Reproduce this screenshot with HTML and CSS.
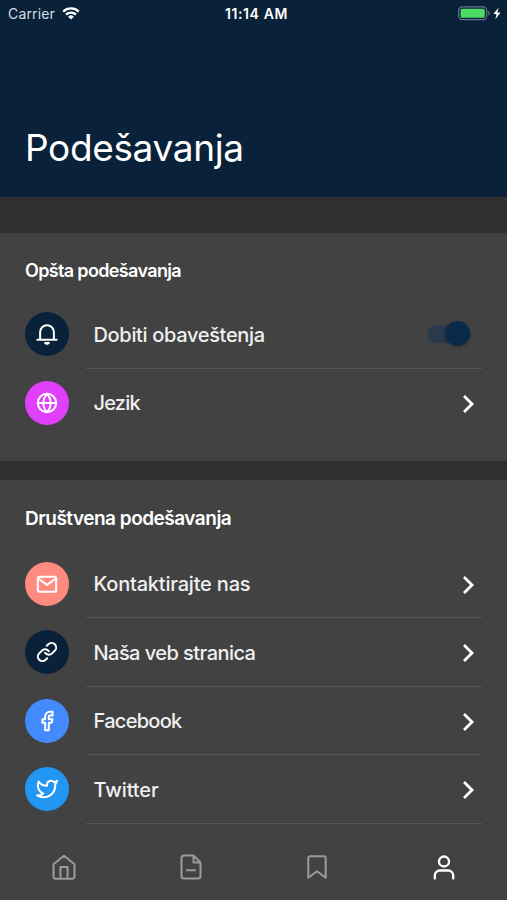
FILE: index.html
```html
<!DOCTYPE html>
<html lang="sr">
<head>
<meta charset="utf-8">
<title>Podešavanja</title>
<link rel="stylesheet" href="styles.css">
</head>
<body>
<header class="header">
  <div class="status">
    <div class="carrier"><span class="carrier-name">Carrier</span>
      <svg width="18" height="13" viewBox="0 0 18 13" fill="none" stroke="#fff" stroke-width="2.3"><path d="M1.2 4.6a11.2 11.2 0 0 1 15.6 0M4 7.6a7.2 7.2 0 0 1 10 0"/><path d="M9 12.6 6.1 9.7a4.2 4.2 0 0 1 5.8 0z" fill="#fff" stroke="none"/></svg>
    </div>
    <div class="clock"><span class="clock-text">11:14 AM</span></div>
    <div class="power">
      <svg width="44" height="15" viewBox="0 0 44 15"><rect x=".7" y=".9" width="28" height="12.8" rx="3.6" fill="none" stroke="#667584" stroke-width="1.2"/><rect x="2.6" y="2.8" width="24.2" height="9" rx="1.6" fill="#4cd964"/><path d="M30.3 5v4.6c2-.7 2-3.9 0-4.6z" fill="#667584"/><path d="M40.5 1.7 35.3 8h3.1l-1 5.2 5.2-6.6h-3.2z" fill="#fff"/></svg>
    </div>
  </div>
  <h1 class="title"><span class="title-text">Podešavanja</span></h1>
</header>
<main>
  <section class="section general">
    <h2 class="heading"><span class="h-general">Opšta podešavanja</span></h2>
    <div class="row">
      <span class="badge navy"><svg class="icon" viewBox="0 0 24 24"><path d="M1.5 18.200h21M4.500 18V10a7.500 7.500 0 0 1 15 0v8M10 21.800h4l-2 1z"/></svg></span>
      <div class="cell"><span class="label l-notify">Dobiti obaveštenja</span><span class="switch"><span class="knob"></span></span></div>
    </div>
    <div class="row">
      <span class="badge magenta"><svg class="icon" viewBox="0 0 24 24"><circle cx="12" cy="12" r="10"/><path d="M2 12h20M12 2a15.3 15.3 0 0 1 4 10 15.3 15.3 0 0 1-4 10 15.3 15.3 0 0 1-4-10 15.3 15.3 0 0 1 4-10z"/></svg></span>
      <div class="cell last"><span class="label l-language">Jezik</span><svg class="chevron" viewBox="0 0 12 20"><path d="m2 2 8 8-8 8"/></svg></div>
    </div>
  </section>
  <section class="section social">
    <h2 class="heading"><span class="h-social">Društvena podešavanja</span></h2>
    <div class="row">
      <span class="badge coral"><svg class="icon" viewBox="0 0 24 24"><rect x="2" y="4" width="20" height="16.5" rx="2"/><path d="m2.3 6 9.7 7 9.7-7"/></svg></span>
      <div class="cell"><span class="label l-contact">Kontaktirajte nas</span><svg class="chevron" viewBox="0 0 12 20"><path d="m2 2 8 8-8 8"/></svg></div>
    </div>
    <div class="row">
      <span class="badge navy"><svg class="icon" viewBox="0 0 24 24"><path d="M10 13a5 5 0 0 0 7.54.54l3-3a5 5 0 0 0-7.07-7.07l-1.72 1.71"/><path d="M14 11a5 5 0 0 0-7.54-.54l-3 3a5 5 0 0 0 7.07 7.07l1.71-1.71"/></svg></span>
      <div class="cell"><span class="label l-web">Naša veb stranica</span><svg class="chevron" viewBox="0 0 12 20"><path d="m2 2 8 8-8 8"/></svg></div>
    </div>
    <div class="row">
      <span class="badge blue"><svg class="icon" viewBox="0 0 24 24"><path d="M18 2h-3a5 5 0 0 0-5 5v3H7v4h3v8h4v-8h3l1-4h-4V7a1 1 0 0 1 1-1h3z"/></svg></span>
      <div class="cell"><span class="label l-facebook">Facebook</span><svg class="chevron" viewBox="0 0 12 20"><path d="m2 2 8 8-8 8"/></svg></div>
    </div>
    <div class="row">
      <span class="badge sky"><svg class="icon" viewBox="0 0 24 24"><path d="M23 3a10.9 10.9 0 0 1-3.14 1.53 4.48 4.48 0 0 0-7.86 3v1A10.66 10.66 0 0 1 3 4s-4 9 5 13a11.64 11.64 0 0 1-7 2c9 5 20 0 20-11.5a4.5 4.5 0 0 0-.08-.83A7.72 7.72 0 0 0 23 3z"/></svg></span>
      <div class="cell"><span class="label l-twitter">Twitter</span><svg class="chevron" viewBox="0 0 12 20"><path d="m2 2 8 8-8 8"/></svg></div>
    </div>
  </section>
</main>
<nav class="tabs">
  <svg class="tab" viewBox="0 0 26 28"><path d="M2.5 11.2 13 2.8l10.5 8.4v12.3a2.2 2.2 0 0 1-2.2 2.2H4.700a2.200 2.200 0 0 1-2.200-2.200zM9.500 25.500V14h7v11.500"/></svg>
  <svg class="tab" viewBox="0 0 26 28"><path d="M15.500 2.500H6A2.500 2.500 0 0 0 3.500 5v18A2.500 2.500 0 0 0 6 25.500h14a2.500 2.500 0 0 0 2.500-2.500V9.500zM15.500 2.500v7h7M9 17.300h8"/></svg>
  <svg class="tab" viewBox="0 0 26 28"><path d="M21.700 24.800 13 18.300l-8.700 6.500V5.200a2 2 0 0 1 2-2h13.400a2 2 0 0 1 2 2z"/></svg>
  <svg class="tab active" viewBox="0 0 26 28"><circle cx="13" cy="8.500" r="5"/><path d="M3.800 25.500v-3a5 5 0 0 1 5-5h8.400a5 5 0 0 1 5 5v3"/></svg>
</nav>
</body>
</html>
```
FILE: styles.css
```css
* { box-sizing: border-box; }
body {
  margin: 0;
  height: 900px;
  overflow: hidden;
  background: #303030;
  color: #fff;
  font-family: Inter, "Open Sans", sans-serif;
  display: flex;
  flex-direction: column;
}
svg { display: block; flex: none; }
h1, h2 { margin: 0; }
.header { height: 196.5px; background: #092139; flex: none; }
.status {
  display: grid;
  grid-template-columns: 1fr 1fr 1fr;
  align-items: center;
  height: 27px;
  padding: 0 5px 0 8px;
}
.carrier { display: flex; align-items: center; gap: 7px; font-size: 14px; color: #d8dee3; }
.carrier-name { letter-spacing: 0.15px; }
.clock { text-align: center; font-size: 14px; font-weight: 600; padding-left: 3px; }
.clock-text { letter-spacing: 0.6px; }
.power { display: flex; justify-content: flex-end; }
.title {
  padding: 98px 0 0 25px;
  font-size: 37px;
  line-height: 46px;
  font-weight: 400;
}
.title-text { letter-spacing: -0.35px; }
main { flex: 1; min-height: 0; overflow: hidden; }
.section { background: #424242; }
.general { margin-top: 36.5px; height: 228px; }
.social { margin-top: 18.5px; height: 360px; }
.heading {
  padding: 26px 0 0 25px;
  height: 67px;
  font-size: 18px;
  line-height: 24px;
  font-weight: 600;
}
.social .heading { height: 70px; padding-top: 27px; font-size: 19px; }
.h-general { letter-spacing: -0.65px; }
.h-social { letter-spacing: -0.5px; }
.row { display: flex; height: 68.5px; padding: 0 25px; }
.badge {
  width: 44px;
  height: 44px;
  margin-top: 12px;
  border-radius: 50%;
  display: flex;
  align-items: center;
  justify-content: center;
  flex: none;
}
.navy { background: #092139; }
.magenta { background: #e040fb; }
.coral { background: #ff8a80; }
.blue { background: #448aff; }
.sky { background: #2196f3; }
.icon { width: 22px; height: 22px; fill: none; stroke: #fff; stroke-width: 2.2; stroke-linecap: round; stroke-linejoin: round; }
.cell {
  flex: 1;
  margin-left: 17px;
  padding: 2px 8px 0 7.5px;
  display: flex;
  align-items: center;
  justify-content: space-between;
  border-bottom: 1px solid #565656;
}
.last { border-bottom-color: transparent; }
.label { font-size: 20px; line-height: 26px; font-weight: 500; color: #f0f0f0; white-space: nowrap; }
.l-notify { letter-spacing: -0.33px; }
.l-language { letter-spacing: -0.8px; }
.l-contact { letter-spacing: -0.2px; }
.l-web { letter-spacing: -0.55px; }
.l-facebook { letter-spacing: -0.7px; }
.l-twitter { letter-spacing: -0.1px; }
.chevron { width: 12px; height: 20px; margin-top: 1px; fill: none; stroke: #fff; stroke-width: 2.8; }
.switch {
  width: 43px;
  height: 18px;
  margin-right: 4px;
  margin-bottom: 2px;
  border-radius: 9px;
  background: #293a4b;
  display: flex;
  align-items: center;
  justify-content: flex-end;
}
.knob { width: 25px; height: 25px; flex: none; border-radius: 50%; background: #092a49; box-shadow: 0 1px 3px #0005; }
.tabs {
  height: 60px;
  flex: none;
  display: grid;
  grid-template-columns: repeat(4, 1fr);
  align-items: center;
  justify-items: center;
  padding: 0 0 6px 1px;
  background: #424242;
}
.tab { width: 26px; height: 28px; fill: none; stroke: #9b9b9b; stroke-width: 2; stroke-linejoin: round; stroke-linecap: round; }
.active { stroke: #fff; stroke-width: 2.3; }
```
